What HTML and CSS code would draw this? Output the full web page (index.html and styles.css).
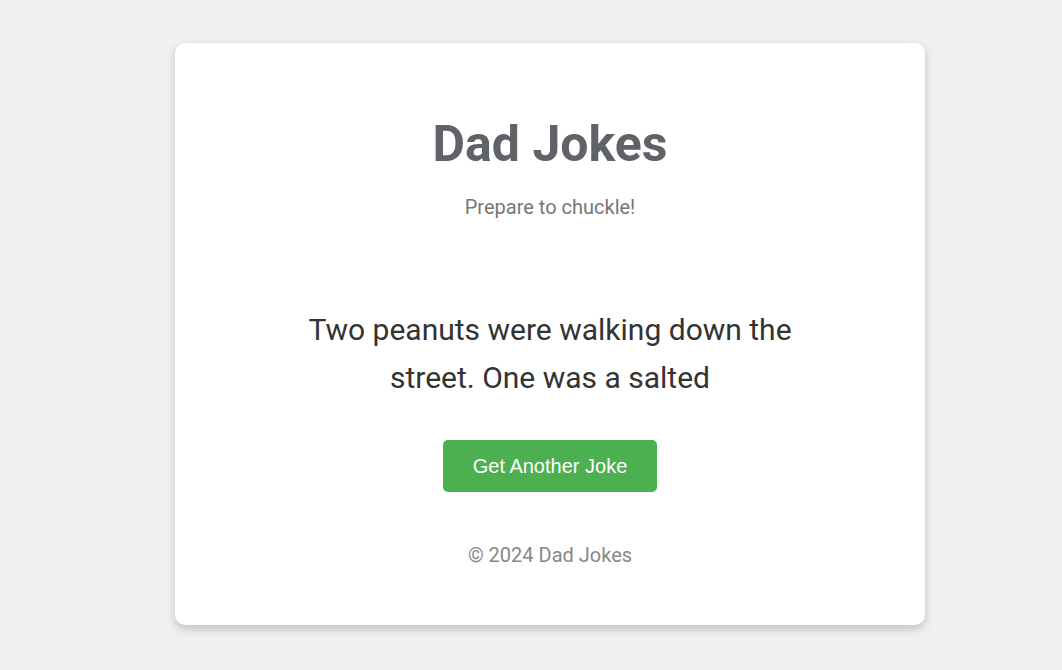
FILE: index.html
```html
<!DOCTYPE html>
<html lang="en">
<head>
<meta charset="utf-8">
<title>Dad Jokes</title>
<link rel="stylesheet" href="styles.css">
</head>
<body>
<main class="card">
  <header class="head">
    <h1 class="title">Dad Jokes</h1>
    <p class="subtitle">Prepare to chuckle!</p>
  </header>
  <section class="joke-box">
    <p class="joke">Two peanuts were walking down the street. One was a salted</p>
    <button class="btn" type="button">Get Another Joke</button>
  </section>
  <footer class="foot">© 2024 Dad Jokes</footer>
</main>
</body>
</html>
```
FILE: styles.css
```css
* { box-sizing: border-box; }
html, body { margin: 0; padding: 0; }
body {
  background: #f0f0f0;
  font-family: Roboto, "Noto Sans", sans-serif;
  min-height: 670px;
  padding-top: 43px;
}
.card {
  width: 750px;
  margin: 0 0 0 175px;
  background: #fff;
  border-radius: 10px;
  box-shadow: 0 4px 10px rgba(0,0,0,0.2);
  padding: 72px 40px 58px;
  text-align: center;
  display: flex;
  flex-direction: column;
  align-items: center;
}
.head { display: flex; flex-direction: column; align-items: center; }
.title {
  margin: 0;
  font-size: 50px;
  line-height: 58px;
  font-weight: 700;
  color: #5f6368;
}
.subtitle {
  margin: 23px 0 0;
  font-size: 20px;
  line-height: 23px;
  color: #777;
}
.joke-box {
  display: flex;
  flex-direction: column;
  align-items: center;
  margin-top: 87px;
}
.joke {
  margin: 0;
  max-width: 520px;
  font-size: 30px;
  line-height: 48px;
  color: #333;
}
.btn {
  margin-top: 38px;
  background: #4caf50;
  color: #fff;
  border: none;
  border-radius: 5px;
  padding: 15px 30px;
  font-family: "Liberation Sans", Arial, sans-serif;
  font-size: 20px;
  line-height: 22px;
  cursor: pointer;
}
.foot {
  margin-top: 52px;
  font-size: 20px;
  line-height: 23px;
  color: #888;
}
```
